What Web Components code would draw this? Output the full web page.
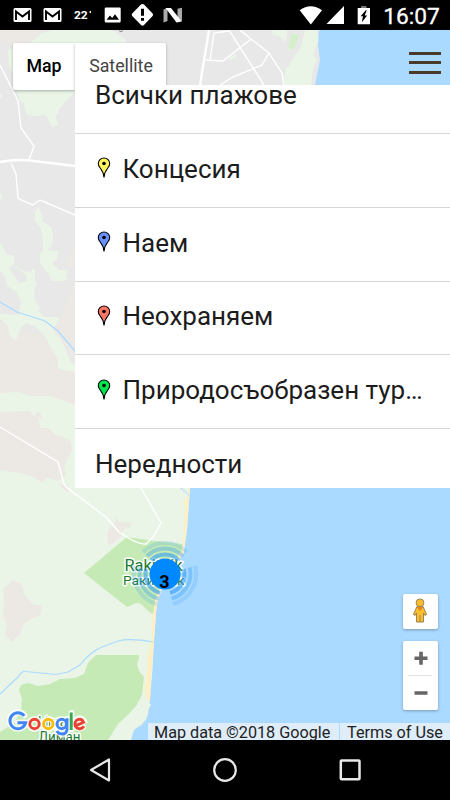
<!DOCTYPE html>
<html lang="bg">
<head>
<meta charset="utf-8">
<title>Map</title>
<style>
html,body{margin:0;width:450px;height:800px;overflow:hidden;background:#000}
body{font-family:Roboto,"Liberation Sans",sans-serif}
</style>
</head>
<body>
<beach-app></beach-app>
<script>
function define(name, html) {
  customElements.define(name, class extends HTMLElement {
    constructor() {
      super();
      this.attachShadow({ mode: 'open' }).innerHTML = html;
    }
  });
}

define('status-bar', `
<style>
:host{display:flex;height:30px;background:#000;color:#fff}
svg{display:block}
</style>
<svg width="450" height="30" viewBox="0 0 450 30" fill="#fff">
 <g><rect x="13.500" y="8" width="18" height="14" rx="1.500"/><path d="M16 20V11.500L22.500 16.500L29 11.500V20" fill="none" stroke="#000" stroke-width="1.900"/></g>
 <g transform="translate(30 0)"><rect x="13.500" y="8" width="18" height="14" rx="1.500"/><path d="M16 20V11.500L22.500 16.500L29 11.500V20" fill="none" stroke="#000" stroke-width="1.900"/></g>
 <text x="74" y="19.300" font-size="11" font-weight="700" textLength="13.700" lengthAdjust="spacingAndGlyphs">22</text><circle cx="90.300" cy="12" r=".9"/>
 <path d="M106 7.500h13.500q1.200 0 1.200 1.200v12.300q0 1.500-1.200 1.500H106q-1.300 0-1.300-1.500V8.700q0-1.200 1.300-1.200z"/>
 <path d="M106.500 19.800L110 15.500L112.200 18L115 14.200L119 19.800z" fill="#000"/>
 <path d="M142.500 4Q143.500 4 144 4.600L152.600 13.500Q153.600 14.700 152.600 15.900L144 25Q142.500 26.400 141 25L132.200 15.900Q131.200 14.700 132.200 13.500L141 4.600Q141.500 4 142.500 4z"/>
 <path d="M141 8.800h3v7h-3zM141 18h3v2.800h-3z" fill="#000"/>
 <path d="M163.500 9.500L167.500 8V21L163.500 22.500zM177.500 8.800L182 7.700V21.300L177.500 19z" fill="#aaa"/><path d="M165.500 8L171 8L181.700 21.500L176.500 22.500z"/>
 <path d="M299.700 10.300Q310.800 2 322 10.300L310.800 24.500z"/><path d="M344 6V24H326.500z"/>
 <path d="M361.300 6.500h4.900V8h3.800V24.300h-12.300V8h3.600z"/><path d="M361.300 6.500h4.900V8h-4.900z" fill="#777"/><path d="M365.800 10.200L360.600 16.300H363L361.800 22.200L367.200 15.500H364.700L366.800 10.200z" fill="#000"/>
 <text x="383.300" y="24" font-size="22.700" font-weight="400" stroke="#fff" stroke-width=".3" textLength="56.500" lengthAdjust="spacingAndGlyphs">16:07</text>
</svg>`);

define('map-canvas', `
<style>
:host{display:block;width:450px;height:710px}
svg{display:block}
</style>
<svg width="450" height="710" viewBox="0 30 450 710">
 <rect y="30" width="450" height="710" fill="#aadaff"/>
 <path d="M0 30H319L318 45L320 60L315 85L190 487L187 530L184 550L165 578L157 600L154 640L152 675L150 700L148 715L142 725L132 730L130 740H0z" fill="#e8e8e8"/>
 <path d="M0 30H41L36 38L26 46H12L0 40z" fill="#ece9e4"/>
 <path d="M36 38Q42 31 54 30H112L126 40V44H75V91L60 108L54 120L46 115L34 116L26 114L24 103L20 101L18 94L13 85L7 76L9 65L8 50L28 44z" fill="#eaf5e8"/>
 <path d="M0 46L18 85L0 85z" fill="#e8e8e8"/>
 <path d="M55 91H75L68 98L56 102L54 110L58 125L52 127L46 115L34 116L26 114L24 103L18 94z" fill="#eaf5e8"/>
 <path d="M0 93L2 96L0 99zM0 193L3 197L0 200z" fill="#eaf5e8"/>
 <path d="M38 207L43 217L42 221L51 227L53 235L52 246L47 250L58 251L57 260L52 263L68 279L62 281H51L50 276L44 268L40 263V254L43 250V240L41 229L35 220V212z" fill="#eaf5e8"/>
 <path d="M0 243L4 249L7 255H14V264L9 268L19 283L27 281L26 275L18 269L16 265L22 271L32 272V268L35 270V281L37 284L34 290L35 300L40 307L38 311L45 317L58 317L65 331L61 339L70 360L75 366V372H65L57 367L58 359L50 347L43 334L34 326L26 323L21 328L20 337L16 341L9 335L8 326L0 319V314L19 315L21 302L16 291L7 286L5 277L0 270z" fill="#eaf5e8"/>
 <path d="M75 245L65 262L75 268zM75 280L64 310L53 330L75 358V405L0 393V319L8 326L9 335L16 341L20 330L43 334L58 359V369L75 372z" fill="#ece9e5"/>
 <path d="M45 270H68L65 278L58 279L54 276z" fill="#eaf5e8"/>
 <path d="M0 393L19 392L30 396H50L75 405V488H190L187 530L184 550L165 578L157 600L154 640L152 675L147 715L132 730L130 740H0z" fill="#eaf5e8"/>
 <path d="M0 412L30 411L33 415L39 419L40 428H48L55 434L71 441L72 450L68 459L64 466L66 476L58 481L48 478L42 482L31 476L20 473L0 470z" fill="#ece9e5"/>
 <path d="M37 411L44 416L40 413L44 420L35 416z" fill="#ece9e5"/>
 <path d="M59 484L68 486L69 493L63 489zM38 480h7l-3 3z" fill="#ece9e5"/>
 <path d="M116.500 517L119 522L132 523L130 527L123 530L121 536L113 544H108L107 535L110 527L114 525z" fill="#ece9e5"/>
 <path d="M13 580L22 584L24 594L34 605H42L41 615L31 619L23 625L21 633L12 642L5 635L7 625L3 617L4 600L3 589z" fill="#ece9e5"/>
 <path d="M84 573L127 537L155 541L183 544L182 552L164 577L156 600L154 612L152 614L144 607Q138 600 132 605L127 607Z" fill="#c5eab5"/>
 <path d="M189 488L187 498L183 502L185 506L184 525L182 550L164 577L155 600L152 620L152 640L148 655L147 670L145 690L146 697L150 702L151 675L154 640L155.500 615L158 600L165 581L184 553L187 520L190 488z" fill="#ffefc3"/>
 <path d="M0 732L14 723L21 711L22 699L19 690L21 685L28 683L38 686L50 684L60 679L75 678L84 674L88 663L96 655H139V658L137 664L139 671L144 677L142 695L135 708L118 724L108 740H0z" fill="#c5eab5"/>
 <path d="M147 700L151 705L148 710L146 720L134 730L131 740H109L120 724L136 706z" fill="#eaf5e8"/>
 <path d="M285 85L284 76L286 69L290 64L295 55L301 47L305 30H317L318 41L313 55L317 60L313 68L311 85z" fill="#eaf5e8"/>
 <path d="M272 30H287V36L285 42L279 36L273 35zM229 58L236 54L237 57L231 60z" fill="#eaf5e8"/>
 <path d="M292 33L299 36L294 50L288 48z" fill="#d4efca"/>
 <g fill="none" stroke="#fff" stroke-width="1.400">
  <path d="M0 65L18 101L21 128L34 146L29 160M11 163L16 174L18 198L21 200L33 205L40 200L75 215"/>
  <path d="M0 162Q15 159 30 160.500L75 166" stroke-width="2.400"/>
  <path d="M209 30L200 85" stroke-width="2.400"/>
  <path d="M229 30L264 85M229 31L214 33L210 60M206 60L223 61L251 39L240 30M251 39L269 53L282 73L284 85M269 53L262 65L233 77L220 85"/>
  <path d="M0 427L58 462L64 484L66 487L106 517L119 532Q138 545 146 544L153 537L161 523L141 488"/>
 </g>
 <g fill="none" stroke="#aadaff" stroke-width="1.200"><path d="M0 302L17 312L45 321L58 331L75 351"/><path d="M0 694L18 677Q22 671 25 671.500L56 674.500L68 672L80 665Q90 652 102 647L118 641Q130 638 153 642"/><path d="M181 488L190 496" stroke-dasharray="2 1"/></g>
 <path d="M119 30.500q2 2.500 4 0" stroke="#888" fill="none"/>
 <g fill="#1c7a32" stroke="#fff" stroke-width="3" paint-order="stroke" stroke-linejoin="round">
  <text x="124.500" y="571" font-size="16.500" textLength="58" lengthAdjust="spacingAndGlyphs">Rakitnik</text>
  <text x="123" y="585" font-size="13.500" textLength="61.500" lengthAdjust="spacingAndGlyphs">Ракитник</text>
  <text x="38" y="727" font-size="14" textLength="36" lengthAdjust="spacingAndGlyphs">Liman</text>
  <text x="38.500" y="742" font-size="14" textLength="42" lengthAdjust="spacingAndGlyphs">Лиман</text>
 </g>
</svg>`);

define('cluster-marker', `
<style>:host{display:block;width:68px;height:68px}svg{display:block}</style>
<svg width="68" height="68" viewBox="-34 -34 68 68">
 <g fill="none" stroke="#2b9af8" stroke-width="4">
  <g><path d="M-13.800-13.800A19.500 19.500 0 0 1 13.800-13.800" opacity=".58"/><path d="M-18-18A25.500 25.500 0 0 1 18-18" opacity=".36"/><path d="M-22-22A31.100 31.100 0 0 1 22-22" opacity=".18"/></g>
  <g transform="rotate(120)"><path d="M-13.800-13.800A19.500 19.500 0 0 1 13.800-13.800" opacity=".58"/><path d="M-18-18A25.500 25.500 0 0 1 18-18" opacity=".36"/><path d="M-22-22A31.100 31.100 0 0 1 22-22" opacity=".18"/></g>
  <g transform="rotate(240)"><path d="M-13.800-13.800A19.500 19.500 0 0 1 13.800-13.800" opacity=".58"/><path d="M-18-18A25.500 25.500 0 0 1 18-18" opacity=".36"/><path d="M-22-22A31.100 31.100 0 0 1 22-22" opacity=".18"/></g>
 </g>
 <circle r="15.500" fill="#0088ff"/>
 <text x="-.5" y="13.800" font-size="18" font-weight="700" text-anchor="middle">3</text>
</svg>`);

define('google-logo', `
<style>
:host{display:block;width:90px;height:34px}svg{display:block}
</style>
<svg width="90" height="34" viewBox="4 706 90 34">
 <g fill="none" stroke="#fff" stroke-opacity=".8" stroke-width="6" stroke-linecap="round">
  <path d="M24.500 715.500A8.200 8.200 0 1 0 26 722.500H18"/><circle cx="34.500" cy="724" r="5"/><circle cx="48.500" cy="724" r="5"/><circle cx="61.500" cy="724" r="5"/><path d="M67 719V730Q66 735.500 61 734.500L57 731M71.500 713V729.500M75.500 726L84 721A5 5 0 1 0 83 727"/>
 </g>
 <g fill="none" stroke-width="2.900">
  <path d="M24.200 715.800A8 8 0 1 0 25.700 722.700H17.500" stroke="#4285f4"/>
  <circle cx="34.500" cy="724" r="4.700" stroke="#ea4335"/><circle cx="48.300" cy="724" r="4.700" stroke="#fbbc05"/>
  <circle cx="61.700" cy="724" r="4.700" stroke="#4285f4"/><path d="M67 718.300V729.500Q66.500 734 62 734Q58.500 733.800 56.800 731" stroke="#4285f4"/>
  <path d="M71.200 712.500V730" stroke="#34a853"/><path d="M75.500 725.800L83.500 722.300Q82.200 719.100 79.500 719.300A4.700 4.700 0 0 0 79.800 728.700Q82.400 728.700 83.900 726.300" stroke="#ea4335"/>
 </g>
</svg>`);

define('map-type-switch', `
<style>
:host{display:flex;height:47px;font-size:17.800px;line-height:46px;color:#444}
span{background:#fff;text-align:center;white-space:nowrap;box-shadow:0 1px 3px rgba(0,0,0,.3)}
.on{width:62px;border-radius:2px 0 0 2px;color:#000;font-weight:500}
.off{width:91px;border-radius:0 2px 2px 0;text-indent:1px}
</style>
<span class="on">Map</span><span class="off">Satellite</span>`);

define('menu-toggle', `
<style>
:host{display:flex;flex-direction:column;gap:6.500px;width:32px}
i{height:3px;background:#493a29}
</style><i></i><i></i><i></i>`);

customElements.define('legend-item', class extends HTMLElement {
  constructor() {
    super();
    const color = this.getAttribute('pin');
    const pin = color ? `<svg width="14" height="22" viewBox="0 0 14 22">
      <path d="M7 20.500Q6.800 15.500 3.200 11Q1.200 8.600 1.300 6.500A5.700 5.500 0 0 1 12.700 6.500Q12.800 8.600 10.800 11Q7.200 15.500 7 20.500z" fill="${color}" stroke="#000" stroke-width="1.100"/>
      <circle cx="7" cy="6.500" r="1.800"/></svg>` : '';
    this.attachShadow({ mode: 'open' }).innerHTML = `
<style>
:host{display:flex;align-items:center;box-sizing:border-box;height:73.750px;flex:none;padding:0 26px 3px 20px;border-bottom:1px solid #d6d6d6;font-size:26px;color:#1c1c1c}
svg{flex:none;margin:-1px 11.500px 0 2px}
span{min-width:0;overflow:hidden;white-space:nowrap;text-overflow:ellipsis;line-height:36px}
</style>${pin}<span><slot></slot></span>`;
  }
});

define('legend-menu', `
<style>
:host{display:flex;flex-direction:column;justify-content:flex-start;overflow:hidden;background:#fff}
.list{display:flex;flex-direction:column;margin-top:-24.750px}
</style>
<div class="list"><slot></slot></div>`);

define('map-button', `
<style>
:host{display:flex;flex-direction:column;align-items:center;background:#fff;border-radius:2px;width:35px;box-shadow:0 1px 3px rgba(0,0,0,.3)}
::slotted(svg){display:block}
</style><slot></slot>`);

define('map-credits', `
<style>
:host{display:flex;gap:1px;height:17px;font-size:16.200px;line-height:19px;color:#222;white-space:nowrap;overflow:hidden}
span{background:#dfedf8;box-sizing:border-box}
.a{width:191px;padding-left:6px}.b{width:110px;padding-left:7px}
</style><span class="a">Map data ©2018 Google</span><span class="b">Terms of Use</span>`);

define('nav-bar', `
<style>
:host{display:flex;height:60px;background:#000;align-items:center;justify-content:center;gap:101px}
svg{display:block}
</style>
<svg width="24" height="26" viewBox="0 0 24 26" fill="none" stroke="#e8e8e8" stroke-width="2.200" stroke-linejoin="round"><path d="M21 2.500V23.500L3 13z"/></svg>
<svg width="24" height="26" viewBox="0 0 24 26" fill="none" stroke="#e8e8e8" stroke-width="2.200"><circle cx="12" cy="13" r="10.800"/></svg>
<svg width="24" height="26" viewBox="0 0 24 26" fill="none" stroke="#e8e8e8" stroke-width="2.500"><rect x="2.800" y="3.500" width="18.700" height="18.700" rx=".8"/></svg>`);

define('beach-app', `
<style>
:host{display:flex;flex-direction:column;width:450px;height:800px;overflow:hidden}
main{position:relative;height:710px;overflow:hidden}
main>*{position:absolute}
map-canvas{left:0;top:0}
map-type-switch{left:13px;top:13px}
menu-toggle{left:409px;top:21.500px}
legend-menu{left:75px;top:55px;width:375px;height:402.500px}
cluster-marker{left:131px;top:509.500px}
google-logo{left:4px;top:676px}
.person{left:402.500px;top:564px;height:35px;justify-content:center}
.zoom{left:402.500px;top:611px;height:69px}
map-credits{right:0;bottom:0}
</style>
<status-bar></status-bar>
<main>
 <map-canvas></map-canvas>
 <cluster-marker></cluster-marker>
 <map-type-switch></map-type-switch>
 <menu-toggle></menu-toggle>
 <legend-menu>
  <legend-item>Всички плажове</legend-item>
  <legend-item pin="#fff45c">Концесия</legend-item>
  <legend-item pin="#6991fd">Наем</legend-item>
  <legend-item pin="#fd7567">Неохраняем</legend-item>
  <legend-item pin="#00e64d">Природосъобразен туризъм</legend-item>
  <legend-item>Нередности</legend-item>
 </legend-menu>
 <map-button class="person"><svg width="18" height="27" viewBox="0 0 18 27"><path d="M6 8.500L2.500 16.500L4 17.500L5.500 15V24H12.500V15L14 17.500L15.500 16.500L12 8.500z" fill="#fbbf2d" stroke="#9b8353" stroke-width="1"/><circle cx="9" cy="4.800" r="3.900" fill="#fbbf2d" stroke="#9b8353"/><path d="M5.500 9H12.500L9 13z" fill="#e58b1c"/><path d="M9 17V24" stroke="#9b8353"/></svg></map-button>
 <map-button class="zoom"><svg width="35" height="69" viewBox="0 0 35 69"><path d="M11.500 17.200H24.500M18 10.700V23.700M11.500 52H24.500" stroke="#666" stroke-width="3.600"/><path d="M5 34.500H29" stroke="#e0e0e0"/></svg></map-button>
 <google-logo></google-logo>
 <map-credits></map-credits>
</main>
<nav-bar></nav-bar>`);
</script>
</body>
</html>
